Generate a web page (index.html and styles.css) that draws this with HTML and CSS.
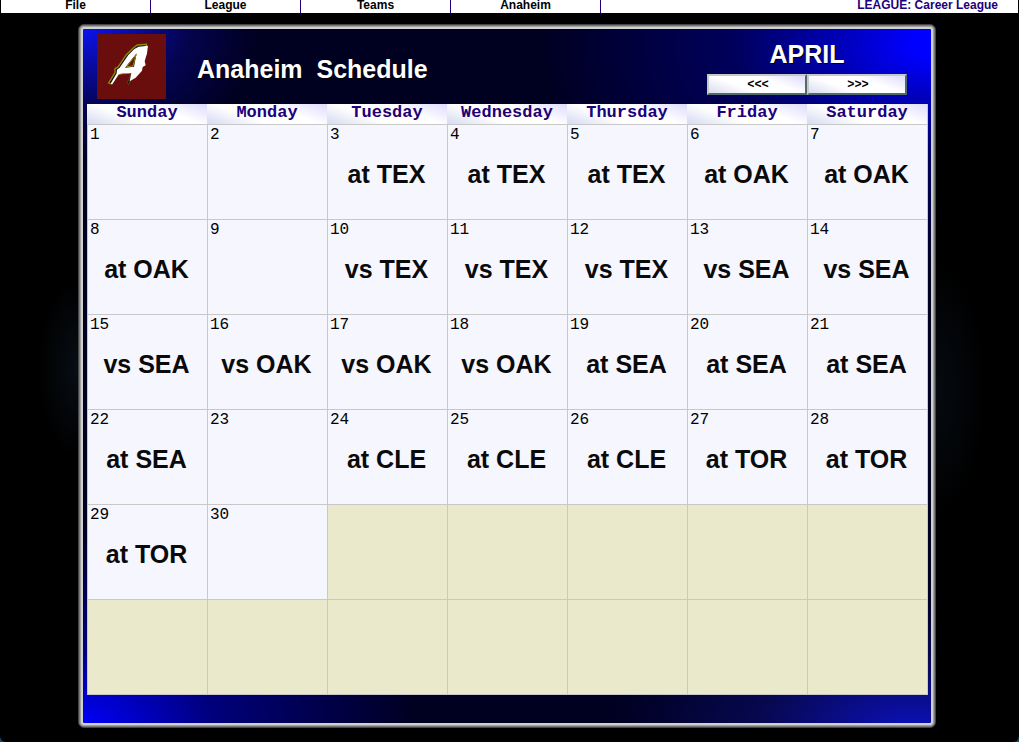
FILE: index.html
```html
<!DOCTYPE html>
<html lang="en">
<head>
<meta charset="utf-8">
<title>Anaheim Schedule</title>
<link rel="stylesheet" href="styles.css">
</head>
<body>
<nav class="menubar">
  <button class="menu" type="button">File</button>
  <button class="menu" type="button">League</button>
  <button class="menu" type="button">Teams</button>
  <button class="menu" type="button">Anaheim</button>
  <span class="league">LEAGUE: Career League</span>
</nav>
<main class="stage">
  <section class="panel">
    <header class="head">
      <svg class="logo" viewBox="0 0 207 195" role="img" aria-label="Anaheim logo">
        <rect width="207" height="195" fill="#6a0d0d"/>
        <path d="M121 33L148 31L148 60L101 117L75 119L63 122L43 150L35 147L54 116L54 104L63 99L88 62L108 43Z" fill="#1c1206" stroke="#8f8a10" stroke-width="4"/>
        <path d="M91 146L99 128L101 117L110 120L103 136L95 151Z" fill="#1c1206" stroke="#6f5a10" stroke-width="2"/>
        <path fill-rule="evenodd" d="M125 38L153 35L150 58L143 82L146 94L137 99L135 110L116 131L98 142L103 117L77 118L65 121L46 151L41 149L59 118L60 107L68 101L94 63L112 45ZM119 58L84 101L111 98Z" fill="#fff"/>
        <path d="M117 62L89 98L108 96Z" fill="#6a0d0d" stroke="#8f8a10" stroke-width="3"/>
      </svg>
      <h1 class="title">Anaheim&nbsp; Schedule</h1>
      <div class="month">
        <h2 class="month-name">APRIL</h2>
        <div class="pager">
          <button class="step" type="button" aria-label="Previous month">&lt;&lt;&lt;</button>
          <button class="step" type="button" aria-label="Next month">&gt;&gt;&gt;</button>
        </div>
      </div>
    </header>
    <table class="calendar">
      <thead>
        <tr><th>Sunday</th><th>Monday</th><th>Tuesday</th><th>Wednesday</th><th>Thursday</th><th>Friday</th><th>Saturday</th></tr>
      </thead>
      <tbody>
        <tr>
          <td><span class="day">1</span></td>
          <td><span class="day">2</span></td>
          <td><span class="day">3</span><span class="game">at TEX</span></td>
          <td><span class="day">4</span><span class="game">at TEX</span></td>
          <td><span class="day">5</span><span class="game">at TEX</span></td>
          <td><span class="day">6</span><span class="game">at OAK</span></td>
          <td><span class="day">7</span><span class="game">at OAK</span></td>
        </tr>
        <tr>
          <td><span class="day">8</span><span class="game">at OAK</span></td>
          <td><span class="day">9</span></td>
          <td><span class="day">10</span><span class="game">vs TEX</span></td>
          <td><span class="day">11</span><span class="game">vs TEX</span></td>
          <td><span class="day">12</span><span class="game">vs TEX</span></td>
          <td><span class="day">13</span><span class="game">vs SEA</span></td>
          <td><span class="day">14</span><span class="game">vs SEA</span></td>
        </tr>
        <tr>
          <td><span class="day">15</span><span class="game">vs SEA</span></td>
          <td><span class="day">16</span><span class="game">vs OAK</span></td>
          <td><span class="day">17</span><span class="game">vs OAK</span></td>
          <td><span class="day">18</span><span class="game">vs OAK</span></td>
          <td><span class="day">19</span><span class="game">at SEA</span></td>
          <td><span class="day">20</span><span class="game">at SEA</span></td>
          <td><span class="day">21</span><span class="game">at SEA</span></td>
        </tr>
        <tr>
          <td><span class="day">22</span><span class="game">at SEA</span></td>
          <td><span class="day">23</span></td>
          <td><span class="day">24</span><span class="game">at CLE</span></td>
          <td><span class="day">25</span><span class="game">at CLE</span></td>
          <td><span class="day">26</span><span class="game">at CLE</span></td>
          <td><span class="day">27</span><span class="game">at TOR</span></td>
          <td><span class="day">28</span><span class="game">at TOR</span></td>
        </tr>
        <tr>
          <td><span class="day">29</span><span class="game">at TOR</span></td>
          <td><span class="day">30</span></td>
          <td class="blank"></td><td class="blank"></td><td class="blank"></td><td class="blank"></td><td class="blank"></td>
        </tr>
        <tr>
          <td class="blank"></td><td class="blank"></td><td class="blank"></td><td class="blank"></td><td class="blank"></td><td class="blank"></td><td class="blank"></td>
        </tr>
      </tbody>
    </table>
  </section>
</main>
</body>
</html>
```
FILE: styles.css
```css
* { box-sizing: border-box; }

body {
  margin: 0;
  min-height: 100vh;
  display: flex;
  flex-direction: column;
  background: linear-gradient(#0d4a63, #0d4a63) 0 0 / 100% calc(100% - 1px) no-repeat #fff;
  font-family: "Liberation Sans", Arial, sans-serif;
}

.menubar {
  display: flex;
  height: 13px;
  background: #fff;
  border-left: 1px solid #000;
  border-right: 1px solid #000;
}

.menu {
  width: 150px;
  height: 13px;
  padding: 0 0 3px;
  border: 0;
  border-right: 1px solid #20007a;
  background: none;
  color: #000;
  font: bold 12px/10px "Liberation Sans", Arial, sans-serif;
}

.league {
  margin-left: auto;
  padding-right: 20px;
  color: #20007a;
  font-size: 12px;
  font-weight: bold;
  line-height: 10px;
}

.stage {
  flex: 1;
  margin-bottom: 1px;
  padding: 11px 83px 14px 78px;
  border-radius: 0 0 6px 6px;
  background:
    radial-gradient(ellipse 40px 90px at 78px 355px, #080e15, transparent),
    radial-gradient(ellipse 50px 130px at calc(100% - 83px) 375px, #060b11, transparent),
    #000;
}

.panel {
  border: 1px solid #454545;
  border-radius: 6px;
  box-shadow: inset 0 0 0 1px #777, inset 0 0 0 2px #a0a0a0, inset 0 0 0 4px #d0d0d0;
  padding: 4px 7px 32px 8px;
  background:
    radial-gradient(ellipse 180px 140px at 0 0, #0c14f8, #0a0cae 25%, #06067099 60%, #00002200),
    radial-gradient(ellipse 400px 230px at 100% 20px, #0000ff, #0000ff 6%, #0000b4 25%, #00006ccc 50%, #00002200),
    radial-gradient(ellipse 340px 200px at 0 100%, #0000ff, #00007c 40%, #00002200),
    radial-gradient(ellipse 300px 140px at 97% 100%, #0c10b8, #080a5ccc 50%, #00002200),
    #000020;
}

.head {
  display: flex;
  height: 75px;
  padding: 5px 21px 0 10px;
}

.logo { width: 69px; height: 65px; }

.title {
  margin: 20px 0 0 31px;
  color: #fff;
  font-size: 25px;
  line-height: 30px;
  text-shadow: 1px 1px 0 #000;
}

.month { margin-left: auto; width: 200px; }

.month-name {
  margin: 5px 0;
  color: #fff;
  font-size: 25px;
  line-height: 30px;
  text-align: center;
  text-shadow: 1px 1px 0 #000;
}

.pager { display: flex; }

.step {
  flex: 1;
  height: 21px;
  padding: 0 0 0 2px;
  border: 2px solid;
  border-color: #c8c8c8 #4f6b6b #4f6b6b #c8c8c8;
  background: linear-gradient(20deg, #d8dcf0, #fff 35%, #fff 65%, #dcdcfa);
  color: #000;
  font: bold 12px/16px "Liberation Mono", "Courier New", monospace;
}

.calendar {
  width: 100%;
  table-layout: fixed;
  border-collapse: separate;
  border-spacing: 0;
  border-right: 1px solid #c8c8c8;
  border-bottom: 1px solid #c8c8c8;
}

.calendar th {
  height: 20px;
  padding: 0 0 2px;
  background: linear-gradient(20deg, #d4daf0, #fff 35%, #fff 65%, #dedcfc);
  color: #20007a;
  font: bold 17px/18px "Liberation Mono", "Courier New", monospace;
}

.calendar td {
  height: 95px;
  padding: 1px 0 0 2px;
  border-top: 1px solid #c8c8c8;
  border-left: 1px solid #c8c8c8;
  background: #f6f6ff;
  vertical-align: top;
}

.calendar .blank { background: #ebe9cb; }

.day {
  display: block;
  color: #000;
  font: 16px/18px "Liberation Mono", "Courier New", monospace;
}

.game {
  display: block;
  padding: 15px 4px 0 0;
  color: #0a0a0a;
  font-size: 25px;
  font-weight: bold;
  line-height: 30px;
  text-align: center;
  white-space: nowrap;
}
```
